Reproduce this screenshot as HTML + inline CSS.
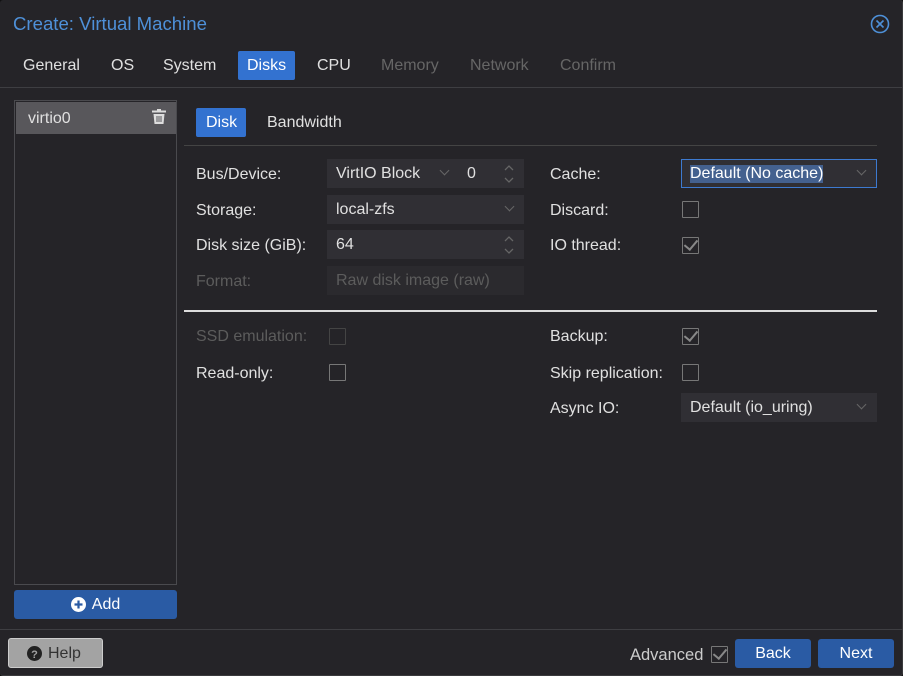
<!DOCTYPE html>
<html><head><style>
*{box-sizing:border-box;margin:0;padding:0}
body{width:903px;height:676px;background:#111;font-family:"Liberation Sans",sans-serif;font-size:16px;color:#e0e0e0;position:relative;overflow:hidden}
.win{position:absolute;left:0;top:0;width:903px;height:676px;background:#252428;border-right:1px solid #3a3a3d;border-bottom:1px solid #3a3a3d;border-radius:3px}
.a{position:absolute}
.t{position:absolute;white-space:nowrap}
.field{position:absolute;background:#302f34;height:29px}
.field span{position:absolute;left:9px;top:6px}
.chev{position:absolute;width:7px;height:7px;border-right:1.3px solid #666;border-bottom:1.3px solid #666;transform:rotate(45deg)}
.cb{position:absolute;width:17px;height:17px;border:1.5px solid #777;border-radius:1px}
.ck:after{content:"";position:absolute;left:4px;top:-1px;width:6px;height:11px;border-right:2px solid #888;border-bottom:2px solid #888;transform:rotate(40deg)}
.btn{position:absolute;background:#2a5ba4;border-radius:3px;color:#fff;text-align:center;line-height:30px}
</style></head><body>
<div class="win">
<div class="t" style="left:13px;top:13px;font-size:18.6px;color:#4e90d8">Create: Virtual Machine</div>
<svg class="a" style="left:870px;top:14px" width="20" height="20"><circle cx="10" cy="10" r="8.5" fill="none" stroke="#4e90d8" stroke-width="1.6"/><path d="M6.5 6.5L13.5 13.5M13.5 6.5L6.5 13.5" stroke="#4e90d8" stroke-width="1.6"/></svg>
<div class="t" style="left:23px;top:57px">General</div>
<div class="t" style="left:111px;top:57px">OS</div>
<div class="t" style="left:163px;top:57px">System</div>
<div class="a" style="left:238px;top:51px;width:57px;height:29px;background:#3372d0;border-radius:2px"></div>
<div class="t" style="left:247px;top:57px;color:#fff">Disks</div>
<div class="t" style="left:317px;top:57px">CPU</div>
<div class="t" style="left:381px;top:57px;color:#666">Memory</div>
<div class="t" style="left:470px;top:57px;color:#666">Network</div>
<div class="t" style="left:560px;top:57px;color:#666">Confirm</div>
<div class="a" style="left:0;top:87px;width:903px;height:1px;background:#3e3e42"></div>

<div class="a" style="left:14px;top:100px;width:163px;height:485px;border:1px solid #4a4a4e"></div>
<div class="a" style="left:16px;top:102px;width:160px;height:32px;background:#58575b"></div>
<div class="t" style="left:28px;top:110px">virtio0</div>
<svg class="a" style="left:152px;top:109px" width="14" height="15"><rect x="0" y="1.5" width="14" height="2" fill="#ddd"/><rect x="5" y="0" width="4" height="2" fill="#ddd"/><path d="M1.5 5h11l-1 10h-9z" fill="#ddd"/><path d="M5 7v6M7 7v6M9 7v6" stroke="#58575b" stroke-width="1"/></svg>
<div class="btn" style="left:14px;top:590px;width:163px;height:29px"><svg style="vertical-align:-3px;margin-right:6px" width="15" height="15"><circle cx="7.5" cy="7.5" r="7.5" fill="#fff"/><path d="M7.5 3.5v8M3.5 7.5h8" stroke="#2a5ba4" stroke-width="2.2"/></svg>Add</div>

<div class="a" style="left:196px;top:108px;width:50px;height:29px;background:#3372d0;border-radius:2px"></div>
<div class="t" style="left:206px;top:114px;color:#fff">Disk</div>
<div class="t" style="left:267px;top:114px">Bandwidth</div>
<div class="a" style="left:184px;top:145px;width:693px;height:1px;background:#444"></div>

<div class="t" style="left:196px;top:166px">Bus/Device:</div>
<div class="field" style="left:327px;top:159px;width:197px"><span>VirtIO Block</span><span style="left:140px">0</span></div>
<div class="chev" style="left:441px;top:167px"></div>
<svg class="a" style="left:503px;top:162px" width="12" height="24"><path d="M2 8l4-4 4 4M2 16l4 4 4-4" fill="none" stroke="#666" stroke-width="1.3"/></svg>
<div class="t" style="left:196px;top:202px">Storage:</div>
<div class="field" style="left:327px;top:195px;width:197px"><span>local-zfs</span></div>
<div class="chev" style="left:506px;top:203px"></div>
<div class="t" style="left:196px;top:237px">Disk size (GiB):</div>
<div class="field" style="left:327px;top:230px;width:197px"><span>64</span></div>
<svg class="a" style="left:503px;top:233px" width="12" height="24"><path d="M2 8l4-4 4 4M2 16l4 4 4-4" fill="none" stroke="#666" stroke-width="1.3"/></svg>
<div class="t" style="left:196px;top:273px;color:#5c5c5c">Format:</div>
<div class="field" style="left:327px;top:266px;width:197px;background:#2b2a2e;color:#5c5c5c;overflow:hidden"><span style="width:154px;overflow:hidden">Raw disk image (raw)</span></div>

<div class="t" style="left:550px;top:166px">Cache:</div>
<div class="field" style="left:681px;top:159px;width:196px;border:1px solid #3d7ad0"><span style="left:8px;top:5px;background:#44618f;color:#fff">Default (No cache)</span></div>
<div class="chev" style="left:858px;top:167px"></div>
<div class="t" style="left:550px;top:202px">Discard:</div>
<div class="cb" style="left:682px;top:201px"></div>
<div class="t" style="left:550px;top:237px">IO thread:</div>
<div class="cb ck" style="left:682px;top:237px"></div>

<div class="a" style="left:184px;top:310px;width:693px;height:2px;background:#ddd"></div>

<div class="t" style="left:196px;top:328px;color:#5c5c5c">SSD emulation:</div>
<div class="cb" style="left:329px;top:328px;border-color:#444"></div>
<div class="t" style="left:196px;top:365px">Read-only:</div>
<div class="cb" style="left:329px;top:364px"></div>
<div class="t" style="left:550px;top:328px">Backup:</div>
<div class="cb ck" style="left:682px;top:328px"></div>
<div class="t" style="left:550px;top:365px">Skip replication:</div>
<div class="cb" style="left:682px;top:364px"></div>
<div class="t" style="left:550px;top:400px">Async IO:</div>
<div class="field" style="left:681px;top:393px;width:196px"><span>Default (io_uring)</span></div>
<div class="chev" style="left:858px;top:401px"></div>

<div class="a" style="left:0;top:629px;width:903px;height:1px;background:#3e3e42"></div>
<div class="a" style="left:8px;top:638px;width:95px;height:30px;background:#a3a3a3;border:1px solid #ccc;border-radius:3px;color:#333;line-height:29px;padding-left:18px"><svg style="vertical-align:-3px;margin-right:6px" width="15" height="15"><circle cx="7.5" cy="7.5" r="7.5" fill="#222"/><text x="7.5" y="12" font-size="11" font-weight="bold" fill="#a3a3a3" text-anchor="middle" font-family="Liberation Sans">?</text></svg>Help</div>
<div class="t" style="left:630px;top:646px;color:#ccc;font-size:16.5px">Advanced</div>
<div class="cb ck" style="left:711px;top:646px"></div>
<div class="btn" style="left:735px;top:639px;width:76px;height:29px">Back</div>
<div class="btn" style="left:818px;top:639px;width:76px;height:29px">Next</div>
</div>
</body></html>
